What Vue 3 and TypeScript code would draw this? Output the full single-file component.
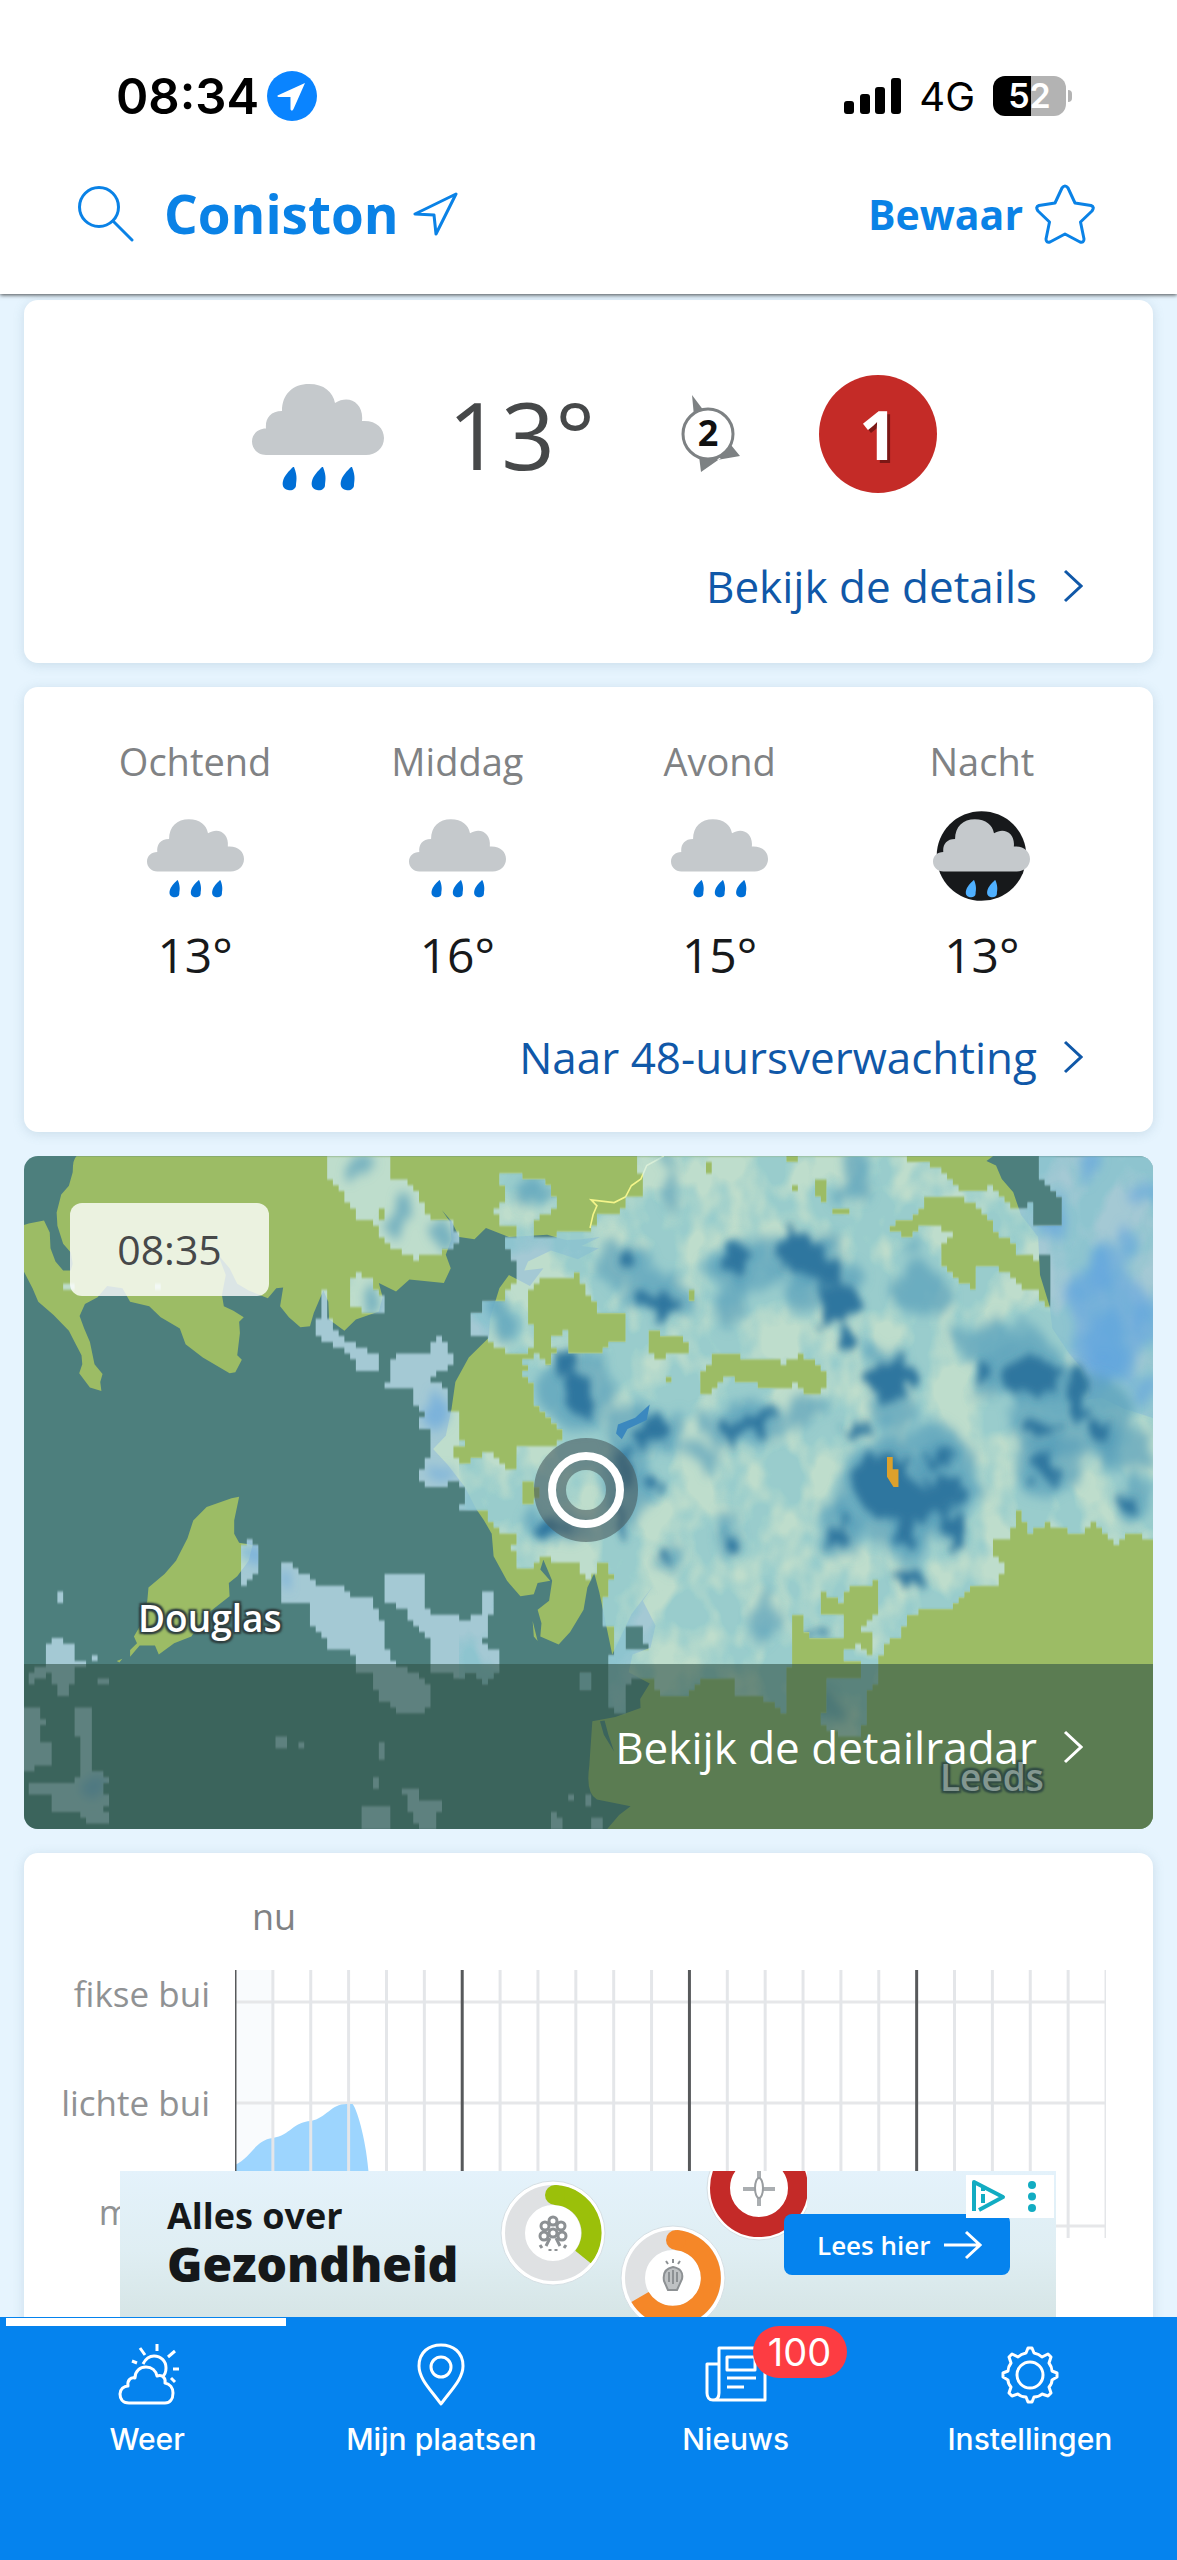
<script setup lang="ts">
interface DayPart {
  name: string
  temp: string
  night?: boolean
}

interface Blob {
  x: number
  y: number
  rx: number
  ry: number
}

type Point = [number, number]

const dayParts: DayPart[] = [
  { name: 'Ochtend', temp: '13°' },
  { name: 'Middag', temp: '16°' },
  { name: 'Avond', temp: '15°' },
  { name: 'Nacht', temp: '13°', night: true },
]

const cloudPath =
  'M14 71C6 71 0 65 0 57.500C0 50 6 44.500 14 44.500C13 35 18 27 30 27C30 10 41 0 57 0C72 0 81 8 83 19C97 10 112 19 110 37C124 36 132 44 132 54C132 64 124 71 114 71Z'
const drop = 'C46 93 44 97 44 101C44 105 40 107 36 106C31 105 30 101 31 97C32 92 37 87 41 83Z'

const blob = (x: number, y: number, rx: number, ry: number): Blob => ({ x, y, rx, ry })

// Outlines of the rain areas, in map units
const rainOutlines = `
  M1658 34L1673 75V125H1643L1638 155L1568 165L1563 180L1550 200H1475L1440 215H1400L1398 180L1445 155L1460 140L1440 110L1410 85H1370L1365 68H1312L1310 100L1325 130L1295 155L1310 185H1350L1355 210L1310 225L1340 260L1355 300L1325 340L1320 355L1262 360V380H1232V433H1275L1290 455L1320 470H1382L1398 435L1382 400L1388 320L1430 303L1480 313L1510 290L1530 335L1568 380H1630V455H1593L1548 485L1520 470H1490V425L1445 440L1448 475L1430 500L1405 480L1370 490L1375 515L1342 530L1385 520L1390 560L1405 600L1460 640L1475 665L1440 685H1360L1340 680L1355 700L1340 745L1300 710L1265 695L1240 715L1210 720L1187 700V680L1215 690L1200 650V605H1170L1168 555L1125 535L1140 520L1170 510L1185 485L1165 460L1150 435L1127 450L1125 475H1035L1020 500L1022 535L1003 548L1080 550V590L1110 605L1095 640L1125 650L1128 710H1110L1095 760L1125 772H1175L1185 755L1215 790L1203 825H1275L1285 860L1305 880H1345L1340 920L1360 955H1398L1415 935L1505 945L1530 985L1550 975L1558 945H1583L1598 975L1583 1020L1568 1040L1573 1075L1598 1090L1603 1150L1583 1160L1586 1270L1628 1280L1633 1215L1698 1200L1713 1230L1748 1245H1798L1828 1210H1920L1923 1245L1968 1235L2008 1255L2053 1285L2060 1180L2073 1165V1065H2093V1100L2148 1115L2198 1110L2208 1100L2198 1060H2153L2148 1010L2198 1030L2218 1000L2288 988V1060L2243 1100L2286 1105L2273 1150L2253 1130L2198 1140V1165H2253L2258 1190L2228 1205H2153L2163 1260L2138 1300L2198 1330H2253L2268 1240L2298 1200L2305 1130L2358 1105L2368 1070L2428 1045H2488L2558 990L2608 998L2623 950L2596 930V897L2643 885L2658 815L2688 880L2738 855L2818 880L2863 855L2923 905L2968 868L3018 905V34H2718V75L2738 100L2773 130V185L2723 195L2698 180L2700 135L2673 150L2653 155L2588 105L2518 110L2468 75L2428 50L2358 38V34Z
  M2058 34H2088V50H2063ZM1846 52H1860V78H1846ZM2136 92H2166V140L2136 130ZM2180 145H2213V158H2180ZM2073 105H2088V118H2073ZM2318 185L2378 180L2433 120L2508 125L2558 150L2588 175L2608 210L2653 225L2663 255L2713 265L2718 330L2673 328L2628 295L2578 278L2550 285L2548 328L2508 322L2458 270V230L2498 205L2418 190L2363 222ZM1688 422L1793 445L1798 472L1723 487L1693 465ZM1828 530L1873 475H1938V487L2053 497L2098 478L2166 520L2148 565L2093 562L2088 542L2023 562L1968 545L1893 530L1858 562H1828ZM1798 330H1813V355H1798ZM1738 525H1751V538H1738ZM1630 1090H1678L1693 1140H1630ZM2723 250H2748V380L2713 345ZM1370 765H1395L1412 790L1400 812H1370Z
  M850 34H1015L1018 80L1060 85L1115 150L1120 172H1170L1200 210L1185 245H1160L1155 260L1080 262L1040 245L990 215L1003 150H990L985 185L940 180L895 120L850 75Z
  M915 330L930 290L970 315L1000 350V380L925 378Z
  M835 335H860V400L890 440L985 480V510L930 512L920 490L880 460L820 430L835 390Z
  M655 890L682 910V960L635 998V910Z
  M728 945H755L850 1000L890 995L920 1020L965 1015L1000 1080L1005 1130L1035 1170L1125 1215V1260L1100 1285H1040L985 1240L970 1190H930L920 1145L865 1140L805 1065L803 1040L745 1035L728 1000Z
  M1003 975L1110 970V1040L1140 1065L1190 1055L1205 1075L1260 1060L1265 1012L1293 1015L1290 1050L1275 1070L1265 1130L1308 1150V1185L1270 1215L1235 1190L1195 1205L1165 1185H1128L1125 1120L1080 1085L1060 1050L1003 1030Z
  M145 1012H162V1038H145ZM115 1125L145 1115L190 1130L195 1160L250 1158L190 1190L185 1235L165 1255L145 1230L135 1190L70 1218L75 1190L115 1180Z
  M62 1265H105L115 1300L100 1340L130 1345V1400L62 1410Z
  M190 1275H238L235 1400L285 1425L270 1450L285 1480L270 1500L298 1515L280 1535L225 1530L210 1505H135L130 1470L70 1465V1435L185 1445L210 1410V1335L190 1325Z
  M250 1208H284V1220H250ZM727 1340H757V1364H727ZM787 1352H802V1364H787ZM988 1352H1002V1390H988ZM972 1420H1000L985 1455H972ZM942 1485H1017V1541H942ZM1050 1447H1090L1095 1475L1155 1475L1140 1541H1100L1065 1490ZM1522 1195H1538V1232H1522ZM1480 1470L1505 1450L1490 1480ZM1435 1500L1475 1520V1541H1440ZM1525 1470H1550V1495H1525ZM1540 1510H1570V1541H1540ZM160 315H190V328H160ZM400 315H425V328H400Z`

const CELL_W = 15
const CELL_H = 13

function parseOutlines(d: string): Point[][] {
  const shapes: Point[][] = []
  let x = 0
  let y = 0
  for (const [, op, args] of d.matchAll(/([MLHVZ])([^MLHVZ]*)/g)) {
    const n = args.trim().split(/\s+/).map(Number)
    if (op === 'Z') continue
    if (op === 'M') shapes.push([])
    if (op === 'H') x = n[0]
    else if (op === 'V') y = n[0]
    else [x, y] = n
    shapes[shapes.length - 1].push([x, y])
  }
  return shapes
}

function toCells(d: string): string {
  const shapes = parseOutlines(d)
  let out = ''
  for (let top = 34; top < 1545; top += CELL_H) {
    const mid = top + CELL_H / 2
    const cuts: number[] = []
    for (const s of shapes) {
      s.forEach(([ax, ay], i) => {
        const [bx, by] = s[(i + 1) % s.length]
        if (ay > mid !== by > mid) cuts.push(ax + ((mid - ay) / (by - ay)) * (bx - ax))
      })
    }
    cuts.sort((a, b) => a - b)
    for (let i = 0; i + 1 < cuts.length; i += 2) {
      const from = Math.round(cuts[i] / CELL_W) * CELL_W
      const to = Math.round(cuts[i + 1] / CELL_W) * CELL_W
      if (to > from) out += `M${from} ${top}H${to}V${top + CELL_H}H${from}Z`
    }
  }
  return out
}

const rainCells = toCells(rainOutlines)

const moderate: Blob[] = [
  blob(1628, 270, 70, 46), blob(2010, 270, 150, 60), blob(2150, 310, 90, 70), blob(2398, 330, 80, 66),
  blob(2588, 440, 120, 34), blob(2800, 620, 160, 100), blob(2738, 730, 90, 70), blob(1838, 700, 46, 26),
  blob(2000, 1060, 24, 60), blob(1390, 125, 46, 36), blob(1045, 170, 30, 66), blob(930, 60, 40, 30),
  blob(1150, 215, 30, 30), blob(1320, 410, 36, 36), blob(1460, 865, 90, 30), blob(2320, 590, 60, 50),
  blob(2420, 680, 110, 50), blob(1690, 650, 110, 60), blob(2230, 80, 46, 40), blob(1760, 110, 20, 50),
  blob(1510, 560, 110, 80), blob(1950, 630, 110, 45), blob(2190, 880, 60, 70), blob(2330, 790, 150, 110),
  blob(2470, 790, 80, 100), blob(1905, 890, 20, 60), blob(1750, 940, 40, 26), blob(2960, 800, 50, 40),
  blob(2160, 1265, 50, 34), blob(2680, 520, 120, 70), blob(950, 340, 24, 22), blob(1640, 760, 60, 100),
  blob(2370, 900, 50, 50), blob(1920, 340, 40, 70), blob(1720, 340, 90, 40), blob(2320, 480, 60, 30),
  blob(2580, 520, 50, 50), blob(2940, 690, 80, 50), blob(2110, 600, 60, 30), blob(1730, 40, 40, 16),
]
const heavy: Blob[] = [
  blob(1930, 270, 36, 34), blob(2090, 250, 62, 44), blob(2150, 290, 44, 34), blob(2188, 365, 56, 44),
  blob(2216, 440, 32, 26), blob(1723, 365, 54, 26), blob(2328, 535, 66, 46), blob(2688, 530, 76, 50),
  blob(2572, 520, 20, 22), blob(1900, 645, 26, 26), blob(1975, 625, 56, 26), blob(1704, 650, 52, 30),
  blob(1518, 580, 32, 70), blob(1480, 500, 30, 30), blob(2310, 770, 88, 72), blob(2380, 810, 60, 44),
  blob(2470, 790, 46, 42), blob(2492, 870, 28, 42), blob(2188, 885, 30, 34), blob(2378, 985, 46, 11),
  blob(1910, 900, 14, 36), blob(2138, 1097, 34, 9), blob(2244, 648, 44, 9), blob(2820, 570, 28, 60),
  blob(2870, 640, 30, 26), blob(2950, 820, 40, 14), blob(1640, 740, 18, 50), blob(1625, 850, 14, 40),
  blob(2720, 640, 50, 14), blob(2370, 880, 30, 28), blob(1440, 870, 46, 20), blob(1715, 765, 26, 16),
  blob(2730, 730, 30, 30), blob(1640, 270, 36, 20), blob(2460, 710, 40, 16), blob(1740, 940, 20, 12),
]
const offshore: Blob[] = [
  blob(2900, 440, 46, 60), blob(2988, 130, 50, 22), blob(2983, 560, 36, 26), blob(2850, 60, 40, 30),
  blob(2860, 300, 36, 40), blob(2806, 340, 22, 30), blob(2880, 520, 60, 50), blob(2950, 220, 30, 40),
  blob(660, 930, 18, 36), blob(755, 980, 22, 26), blob(1140, 600, 26, 50), blob(1150, 740, 36, 22),
  blob(2760, 180, 20, 40), blob(2990, 400, 26, 60), blob(230, 1450, 40, 26), blob(2900, 400, 90, 160),
]

const chartLines = Array.from({ length: 24 }, (_, i) => ({
  x: i * 38,
  kind: i === 0 ? 'edge' : i % 6 === 0 ? 'hour' : 'tick',
}))
</script>

<template>
  <div class="app">
    <header class="top">
      <div class="status">
        <div class="status-left">
          <span class="clock">08:34</span>
          <svg class="loc" viewBox="0 0 50 50" aria-hidden="true">
            <circle cx="25" cy="25" r="25" fill="#0a84ff" />
            <path d="M38 12L10.500 24.500Q10 26 12 26H23.500V38.500Q25 41 26.500 38Z" fill="#fff" />
          </svg>
        </div>
        <div class="status-right">
          <svg class="signal" viewBox="0 0 57 36" aria-hidden="true">
            <rect x="0" y="23" width="10" height="13" rx="3" />
            <rect x="16" y="16" width="10" height="20" rx="3" />
            <rect x="31" y="9" width="10" height="27" rx="3" />
            <rect x="47" y="0" width="10" height="36" rx="3" />
          </svg>
          <span class="network">4G</span>
          <span class="battery"><span class="level">52</span></span>
        </div>
      </div>
      <div class="titlebar">
        <button class="icon-btn" aria-label="Zoeken">
          <svg width="56" height="56" viewBox="0 0 56 56" class="line">
            <circle cx="21" cy="21" r="19.500" />
            <path d="M35 35L54 54" />
          </svg>
        </button>
        <h1>Coniston</h1>
        <svg class="line arrow" width="46" height="46" viewBox="0 0 46 46" aria-hidden="true">
          <path d="M43 3L2 23L21 24L23 43Z" />
        </svg>
        <button class="save">
          Bewaar
          <svg width="60" height="60" viewBox="0 0 60 60" class="line">
            <path d="M27 4Q30 0 33 4L40 19L56 21.500Q60 23 57 27L45.500 38L49 55Q49 59 45 58L30 50L15 58Q11 59 11 55L14.500 38L3 27Q0 23 4 21.500L20 19Z" />
          </svg>
        </button>
      </div>
    </header>

    <main>
      <section class="card now">
        <div class="current">
          <svg class="cloud-big" viewBox="0 0 132 107" aria-hidden="true">
            <path :d="cloudPath" fill="#c5c9cc" />
            <path v-for="n in 3" :key="n" :d="'M42 83' + drop" :transform="`translate(${(n - 1) * 29} 0)`" fill="#006fd6" />
          </svg>
          <span class="temp-big">13°</span>
          <svg class="wind" viewBox="0 0 60 80" role="img" aria-label="Wind 2">
            <path d="M11 1L23 17L13 22Z" fill="#7d8183" />
            <path d="M50 51L59 62L36 66ZM18 62L20 78L40 64Z" fill="#7d8183" />
            <circle cx="27" cy="40" r="25" fill="#fff" stroke="#7d8183" stroke-width="3" />
            <text x="27" y="52" text-anchor="middle">2</text>
          </svg>
          <span class="grade">1</span>
        </div>
        <a class="more" href="#details">Bekijk de details
          <svg viewBox="0 0 20 34" aria-hidden="true"><path d="M2 2L18 17L2 32" /></svg>
        </a>
      </section>

      <section class="card parts">
        <ul>
          <li v-for="part in dayParts" :key="part.name">
            <span class="part-name">{{ part.name }}</span>
            <svg class="cloud-small" viewBox="0 0 132 122" aria-hidden="true">
              <circle v-if="part.night" cx="66" cy="61" r="61" fill="#17191b" />
              <g transform="translate(0 11)">
                <path :d="cloudPath" fill="#c5c9cc" />
                <template v-if="part.night">
                  <path v-for="n in 2" :key="n" :d="'M42 83' + drop" :transform="`translate(${(n - 1) * 29 + 14} 0)`" fill="#4fb0ff" />
                </template>
                <template v-else>
                  <path v-for="n in 3" :key="n" :d="'M42 83' + drop" :transform="`translate(${(n - 1) * 29} 0)`" fill="#006fd6" />
                </template>
              </g>
            </svg>
            <span class="part-temp">{{ part.temp }}</span>
          </li>
        </ul>
        <a class="more" href="#48uur">Naar 48-uursverwachting
          <svg viewBox="0 0 20 34" aria-hidden="true"><path d="M2 2L18 17L2 32" /></svg>
        </a>
      </section>

      <section class="radar">
        <svg class="map" viewBox="0 0 1129 673" preserveAspectRatio="xMidYMid slice" aria-hidden="true">
          <defs>
            <path id="rain" :d="rainCells" />
            <clipPath id="rain-clip"><use href="#rain" /></clipPath>
            <filter id="soft-mid" filterUnits="userSpaceOnUse" x="0" y="0" width="3080" height="1560">
              <feTurbulence type="fractalNoise" baseFrequency="0.012" numOctaves="3" seed="4" result="n" />
              <feDisplacementMap in="SourceGraphic" in2="n" scale="110" xChannelSelector="R" yChannelSelector="G" />
              <feGaussianBlur stdDeviation="13" />
            </filter>
            <filter id="soft-high" filterUnits="userSpaceOnUse" x="0" y="0" width="3080" height="1560">
              <feTurbulence type="fractalNoise" baseFrequency="0.02" numOctaves="3" seed="7" result="n" />
              <feDisplacementMap in="SourceGraphic" in2="n" scale="80" xChannelSelector="R" yChannelSelector="G" />
              <feGaussianBlur stdDeviation="10" />
            </filter>
            <filter id="mottle" x="0" y="0" width="100%" height="100%" color-interpolation-filters="sRGB">
              <feTurbulence type="fractalNoise" baseFrequency="0.009 0.008" numOctaves="3" seed="9" />
              <feColorMatrix values="0 0 0 0 0.5 0 0 0 0 0.76 0 0 0 0 0.8 4 0 0 0 -1.400" />
            </filter>
            <filter id="edge"><feGaussianBlur stdDeviation="2" /></filter>
          </defs>
          <rect width="1129" height="673" fill="#4d7f7d" />
          <g transform="translate(-24 -15) scale(.38265 .44643)">
            <g fill="#9cbc65">
              <path d="M200 34Q190 40 190 70L180 100L160 120L148 160L150 190L165 230L185 250L190 275L185 290H165L145 270L132 240L130 205L115 178L75 185L55 190V280L85 330L100 360L140 390L180 425L195 450L213 480L215 500L207 520L235 552L265 560L262 540L268 522L247 500L235 450L220 420L208 392L222 365L255 350L280 325L320 330L340 360L390 370L420 395L470 420L485 455L530 485L600 520L615 518L632 490L620 480L627 430L625 405L637 395L610 380L585 370L580 345L590 300L570 255L600 285L620 320L650 335L700 352L722 330L740 328L732 370L755 395L785 417L810 415L820 385L845 335L858 360L860 400L900 425L930 400L990 382L1000 350L990 318L1035 337L1070 310L1160 318L1178 285L1165 255L1180 220L1175 180L1155 155L1180 180L1200 215L1240 220L1270 195L1330 215L1430 210L1480 222L1520 220L1568 215L1520 235L1565 240L1510 265L1440 245L1380 270L1370 290L1420 285L1385 325L1330 300L1305 330L1280 400L1278 440L1225 485L1190 540L1180 600L1175 620L1165 660L1132 690L1170 725L1215 775L1245 825L1265 850L1285 880L1290 930L1325 985L1360 1020L1395 1015L1405 990L1438 985L1412 960L1420 938L1443 985L1435 1030L1405 1050L1415 1080L1412 1110L1460 1128L1490 1100L1525 1050L1535 1000L1553 968L1566 1010L1583 1080L1600 1150L1650 1060L1708 995L1680 1030L1713 1085L1700 1135L1653 1150L1643 1190L1698 1215L1673 1250L1674 1270L1608 1290L1548 1300L1540 1400Q1530 1460 1560 1475L1648 1490L1618 1510L1583 1545H3018V622L2938 600L2878 575L2833 580L2848 570L2828 510L2793 475L2750 420L2743 370L2718 300L2713 215L2668 165L2648 115L2618 85L2603 55L2578 45L2595 34Z" />
              <path d="M625 797L605 800L540 820L505 850L490 890L460 940L430 970L388 1000L385 1030L370 1080L350 1110L358 1125L340 1140V1155L365 1130H405L415 1150L455 1125L500 1110L540 1060L600 1020L598 990L620 975L650 940L660 905L625 900L612 880V850Z" />
              <path d="M1392 1075L1405 1120L1395 1110ZM305 1165L320 1160L312 1168Z" />
            </g>
            <path d="M1568 1300L1578 1330L1605 1368L1590 1330L1580 1298Z" fill="#4d7f7d" />
            <path d="M1735 34L1690 55L1675 85L1650 100L1635 125L1605 138L1545 132L1560 145L1550 165L1542 195" fill="none" stroke="#f4f58a" stroke-width="4" />
            <use href="#rain" fill="#d0edff" fill-opacity=".67" filter="url(#edge)" />
            <g clip-path="url(#rain-clip)">
              <rect x="1200" y="34" width="1818" height="1300" filter="url(#mottle)" opacity=".6" />
              <g filter="url(#soft-mid)">
                <ellipse v-for="(b, i) in offshore" :key="i" :cx="b.x" :cy="b.y" :rx="b.rx" :ry="b.ry" fill="#5fa3e0" fill-opacity=".6" />
              </g>
              <g filter="url(#soft-mid)">
                <ellipse v-for="(b, i) in moderate" :key="i" :cx="b.x" :cy="b.y" :rx="b.rx" :ry="b.ry" fill="#569dba" fill-opacity=".68" />
              </g>
              <g filter="url(#soft-high)">
                <ellipse v-for="(b, i) in heavy" :key="i" :cx="b.x" :cy="b.y" :rx="b.rx" :ry="b.ry" fill="#2e769f" />
              </g>
            </g>
            <path d="M1698 590L1690 625L1640 645L1625 668L1610 655L1615 635L1660 620Z" fill="#3b88bf" />
            <path d="M2318 708H2333V735H2348V775H2335L2318 752Z" fill="#dda12c" />
          </g>
        </svg>
        <span class="place douglas">Douglas</span>
        <span class="place leeds">Leeds</span>
        <svg class="marker" viewBox="0 0 104 104" aria-hidden="true">
          <circle cx="52" cy="52" r="36" fill="none" stroke="#4a5c5f" stroke-opacity=".6" stroke-width="32" />
          <circle cx="52" cy="52" r="34" fill="none" stroke="#fff" stroke-width="8" />
        </svg>
        <time class="stamp">08:35</time>
        <a class="more radar-link" href="#radar">Bekijk de detailradar
          <svg viewBox="0 0 20 34" aria-hidden="true"><path d="M2 2L18 17L2 32" /></svg>
        </a>
      </section>

      <section class="card graph">
        <div class="graph-head">nu</div>
        <div class="graph-body">
          <div class="levels">
            <span>fikse bui</span>
            <span>lichte bui</span>
            <span>miezer</span>
          </div>
          <svg class="plot" viewBox="0 0 874 268" preserveAspectRatio="none" aria-hidden="true">
            <rect width="38" height="268" fill="#f9fbfd" />
            <path d="M0 32H874M0 133H874M0 256H874" stroke="#e6e7e9" stroke-width="3" />
            <path d="M0 195C16 188 20 170 38 168C56 165 58 152 76 151C92 148 96 134 112 134H118C124 142 132 175 134 202L142 268H0Z" fill="#9dd5fe" />
            <line v-for="l in chartLines" :key="l.x" :x1="l.x" :x2="l.x" y1="0" y2="268" :class="l.kind" />
          </svg>
        </div>
      </section>
    </main>

    <div class="dock">
      <aside class="ad">
        <div class="ad-copy">
          <span class="ad-lead">Alles over</span>
          <strong>Gezondheid</strong>
        </div>
        <svg class="dials" viewBox="0 0 320 146" aria-hidden="true">
          <g transform="translate(66 62)">
            <circle r="52" fill="#fff" stroke="#d5dfe4" />
            <circle r="38" fill="none" stroke="#dfe1e3" stroke-width="20" />
            <path d="M2 -38A38 38 0 0 1 30 24" fill="none" stroke="#9bc00a" stroke-width="20" />
            <circle cx="2" cy="-38" r="10" fill="#9bc00a" />
            <g fill="none" stroke="#8d9194" stroke-width="3">
              <circle r="4" />
              <circle cx="-8" cy="-7" r="4" /><circle cx="8" cy="-7" r="4" /><circle cx="-9" cy="3" r="4" /><circle cx="9" cy="3" r="4" /><circle cy="-12" r="4" />
              <path d="M-3 5L-7 13M3 5L7 13M-13 12L-11 15M13 12L11 15M-3 16V18M3 16V18" />
            </g>
          </g>
          <g transform="translate(186 107)">
            <circle r="52" fill="#fff" stroke="#d5dfe4" />
            <circle r="38" fill="none" stroke="#dfe1e3" stroke-width="20" />
            <path d="M3 -38A38 38 0 1 1 -33 19" fill="none" stroke="#f58728" stroke-width="20" />
            <circle cx="3" cy="-38" r="10" fill="#f58728" />
            <path d="M-5 12L-9 3Q-11 -9 0 -11Q11 -9 9 1L4 12ZM-4 -6V4M0 -8V6M4 -6V4M-7 -17L-5 -14M0 -19V-15M7 -17L5 -14" fill="#bfc2c4" stroke="#8d9194" stroke-width="2" />
          </g>
          <g transform="translate(272 17)">
            <circle r="52" fill="#fff" stroke="#d5dfe4" />
            <circle r="39" fill="none" stroke="#c42a28" stroke-width="20" />
            <path d="M0 -20V18M-16 1H16" stroke="#aaaeb1" stroke-width="4" />
            <ellipse rx="4" ry="10" fill="#fff" stroke="#999da0" stroke-width="2" />
          </g>
        </svg>
        <a class="ad-btn" href="#gezondheid">Lees hier
          <svg viewBox="0 0 38 30" aria-hidden="true"><path d="M0 15H35M22 2L36 15L22 28" /></svg>
        </a>
        <svg class="ad-choices" viewBox="0 0 88 43" aria-hidden="true">
          <rect width="88" height="43" fill="#fff" />
          <path d="M8 36V7L37 22L13 35" fill="none" stroke="#12acc2" stroke-width="4" stroke-linejoin="round" />
          <path d="M17 19V28M17 13V16" stroke="#12acc2" stroke-width="4" />
          <circle cx="66" cy="10" r="4" fill="#12acc2" /><circle cx="66" cy="21.500" r="4" fill="#12acc2" /><circle cx="66" cy="33" r="4" fill="#12acc2" />
        </svg>
      </aside>

      <nav class="tabs">
        <a class="tab active" href="#weer" aria-current="page">
          <svg viewBox="0 0 64 64" aria-hidden="true">
            <path d="M14 60C7 60 5 55 5 51C5 46 9 43 13 43C12 37 16 34 20 35C20 28 25 24 31 24C37 24 41 28 42 33C47 31 51 35 50 40C55 41 58 45 58 50C58 56 55 60 50 60Z" />
            <path d="M31 21C34 15 38 13 42 13C49 13 54 18 54 25C54 29 53 32 50 34" transform="translate(-3 0)" />
            <path d="M42 1V8M25 5L30 12M60 8L53 14M17 18L22 20M64 26H58M60 39L56 35" />
          </svg>
          <span>Weer</span>
        </a>
        <a class="tab" href="#plaatsen">
          <svg viewBox="0 0 64 64" aria-hidden="true">
            <path d="M32 61C22 47 10 36 10 23C10 9 20 2 32 2C44 2 54 9 54 23C54 36 42 47 32 61Z" />
            <circle cx="32" cy="24" r="10" />
          </svg>
          <span>Mijn plaatsen</span>
        </a>
        <a class="tab" href="#nieuws">
          <svg viewBox="0 0 64 64" aria-hidden="true">
            <path d="M15 50V5H61V57H10M15 50C15 55 13 57 9 57C5 57 3 54 3 50V21H15" />
            <path d="M23 14H51V27H23ZM23 35H52M23 44H40" />
          </svg>
          <span>Nieuws</span>
          <em class="badge">100</em>
        </a>
        <a class="tab" href="#instellingen">
          <svg viewBox="0 0 64 64" aria-hidden="true">
            <path d="M28 10L30 5H34L36 10Q41 11 44 14L50 11L53 14L51 20Q54 24 54 28L59 30V34L54 37Q54 41 51 44L53 50L50 53L44 51Q41 54 36 54L34 59H30L28 54Q23 54 20 51L14 53L11 50L13 44Q10 41 10 37L5 34V30L10 28Q10 24 13 20L11 14L14 11L20 14Q23 11 28 10Z" />
            <circle cx="32" cy="32" r="13" />
          </svg>
          <span>Instellingen</span>
        </a>
      </nav>
    </div>
  </div>
</template>

<style>
body {
  margin: 0;
}
</style>

<style scoped>
.app {
  height: 100vh;
  display: flex;
  flex-direction: column;
  background: #e6f4fe;
  font-family: "Open Sans", "Noto Sans", sans-serif;
  overflow: hidden;
}
.top {
  background: #fff;
  box-shadow: 0 1px 4px rgba(0, 0, 0, 0.7);
  position: relative;
  z-index: 1;
  height: 294px;
  flex: none;
}
.status {
  display: flex;
  justify-content: space-between;
  align-items: center;
  height: 52px;
  padding: 70px 104px 0 116px;
  font-family: Inter, "Liberation Sans", sans-serif;
  color: #000;
}
.status-left,
.status-right {
  display: flex;
  align-items: center;
}
.status-left {
  gap: 8px;
}
.clock {
  font-size: 49px;
  font-weight: 600;
}
.loc {
  width: 50px;
  height: 50px;
}
.signal {
  width: 57px;
  height: 36px;
}
.network {
  font-size: 40px;
  margin: 0 18px;
}
.battery {
  position: relative;
  width: 73px;
  height: 40px;
  border-radius: 12px;
  background: linear-gradient(90deg, #000 52%, #b3b3b3 52%);
  margin-right: 7px;
}
.battery::after {
  content: "";
  position: absolute;
  right: -6px;
  top: 14px;
  width: 4px;
  height: 12px;
  border-radius: 0 4px 4px 0;
  background: #b3b3b3;
}
.level {
  display: block;
  text-align: center;
  color: #fff;
  font-size: 34px;
  line-height: 40px;
  font-weight: 600;
}
.titlebar {
  display: flex;
  align-items: center;
  height: 64px;
  padding: 60px 82px 0 78px;
  color: #0a82e6;
}
.line {
  fill: none;
  stroke: #0a82e6;
  stroke-width: 3;
  stroke-linejoin: round;
  stroke-linecap: round;
  flex: none;
}
button {
  border: 0;
  padding: 0;
  background: none;
  font-family: inherit;
  color: inherit;
  display: flex;
  align-items: center;
}
h1 {
  margin: 0 14px 0 30px;
  font-size: 53px;
  line-height: 64px;
  font-weight: 700;
}
.save {
  margin-left: auto;
  gap: 12px;
  font-size: 41px;
  font-weight: 700;
}
main {
  flex: 1;
  min-height: 0;
  overflow: hidden;
  padding: 6px 24px 0;
  display: flex;
  flex-direction: column;
  gap: 24px;
}
.card {
  flex: none;
  background: #fff;
  border-radius: 14px;
  box-shadow: 0 2px 12px rgba(90, 130, 150, 0.2);
}
.current {
  display: flex;
  align-items: center;
  justify-content: center;
  height: 120px;
  padding: 74px 0 66px 12px;
}
.cloud-big {
  width: 132px;
  height: 107px;
  margin-top: 6px;
}
.temp-big {
  margin: 0 86px 0 64px;
  color: #464849;
  font-size: 94px;
  line-height: 120px;
}
.wind {
  width: 60px;
  height: 80px;
  margin-right: 78px;
}
.wind text {
  font-size: 36px;
  font-weight: 700;
  fill: #111;
}
.grade {
  width: 118px;
  height: 118px;
  border-radius: 50%;
  background: #c42b27;
  color: #fff;
  font-size: 68px;
  line-height: 118px;
  font-weight: 700;
  text-align: center;
  text-shadow: 3px 3px 0 #7c1715;
}
.more {
  display: flex;
  align-items: center;
  justify-content: flex-end;
  gap: 26px;
  padding: 0 70px 0 0;
  height: 52px;
  font-size: 44px;
  line-height: 52px;
  color: #1058a8;
  text-decoration: none;
}
.more svg {
  width: 20px;
  height: 34px;
  fill: none;
  stroke: currentColor;
  stroke-width: 3;
}
.now .more {
  padding-bottom: 51px;
}
.parts {
  padding: 48px 40px 49px;
}
.parts ul {
  list-style: none;
  margin: 0;
  padding: 0 0 46px;
  display: grid;
  grid-template-columns: repeat(4, 1fr);
}
.parts li {
  display: flex;
  flex-direction: column;
  align-items: center;
}
.part-name {
  font-size: 38px;
  line-height: 52px;
  color: #808284;
}
.cloud-small {
  width: 97px;
  height: 90px;
  margin: 24px 0;
}
.part-temp {
  font-size: 48px;
  line-height: 60px;
  color: #17191b;
}
.parts .more {
  padding-right: 30px;
}
.radar {
  flex: none;
  position: relative;
  height: 673px;
  border-radius: 14px;
  overflow: hidden;
}
.map {
  display: block;
  width: 100%;
  height: 100%;
}
.stamp {
  position: absolute;
  left: 46px;
  top: 47px;
  width: 199px;
  height: 93px;
  border-radius: 12px;
  background: rgba(255, 255, 255, 0.8);
  color: #464849;
  font-size: 41px;
  line-height: 93px;
  text-align: center;
}
.place {
  position: absolute;
  color: #fff;
  font-size: 37px;
  line-height: 52px;
  font-weight: 600;
  text-shadow: 2px 2px 2px #2f3f3f, -2px 2px 2px #2f3f3f, 2px -2px 2px #2f3f3f, -2px -2px 2px #2f3f3f;
}
.douglas {
  left: 114px;
  top: 436px;
}
.leeds {
  left: 916px;
  top: 595px;
}
.marker {
  position: absolute;
  left: 510px;
  top: 282px;
  width: 104px;
  height: 104px;
}
.radar-link {
  position: absolute;
  left: 0;
  right: 0;
  bottom: 0;
  height: 165px;
  background: rgba(49, 82, 70, 0.6);
  color: #fff;
}
.graph-head {
  padding: 40px 0 35px 228px;
  font-size: 36px;
  line-height: 48px;
  color: #808284;
}
.graph-body {
  display: flex;
  padding: 0 47px 120px 0;
  margin-top: -6px;
}
.levels {
  width: 186px;
  margin-right: 25px;
  display: flex;
  flex-direction: column;
  gap: 61px;
  text-align: right;
  font-size: 35px;
  line-height: 48px;
  color: #909294;
}
.plot {
  flex: 1;
  min-width: 0;
  height: 268px;
}
.plot .tick {
  stroke: #e4e6e9;
  stroke-width: 3;
}
.plot .hour {
  stroke: #57595b;
  stroke-width: 3;
}
.plot .edge {
  stroke: #57595b;
  stroke-width: 3;
}
.dock {
  flex: none;
  position: relative;
}
.ad {
  position: absolute;
  left: 120px;
  right: 121px;
  bottom: 100%;
  height: 146px;
  overflow: hidden;
  background: linear-gradient(180deg, #e4f2fb, #dfeef3 55%, #d6e5e6);
}
.ad-copy {
  position: absolute;
  left: 47px;
  top: 22px;
  display: flex;
  flex-direction: column;
  color: #15181a;
}
.ad-lead {
  font-size: 36px;
  line-height: 46px;
  font-weight: 700;
}
.ad strong {
  font-size: 48px;
  line-height: 50px;
  font-weight: 800;
}
.dials {
  position: absolute;
  left: 367px;
  top: 0;
  width: 320px;
  height: 146px;
}
.ad-btn {
  position: absolute;
  right: 46px;
  bottom: 42px;
  width: 193px;
  height: 61px;
  padding-left: 33px;
  display: flex;
  align-items: center;
  gap: 14px;
  border-radius: 8px;
  background: #0583ee;
  color: #fff;
  font-size: 26px;
  font-weight: 600;
  text-decoration: none;
}
.ad-btn svg {
  width: 38px;
  height: 30px;
  fill: none;
  stroke: #fff;
  stroke-width: 3;
}
.ad-choices {
  position: absolute;
  right: 2px;
  top: 4px;
  width: 88px;
  height: 43px;
}
.tabs {
  display: grid;
  grid-template-columns: repeat(4, 1fr);
  height: 243px;
  background: #0583ee;
  font-family: Inter, "Liberation Sans", sans-serif;
}
.tab {
  position: relative;
  display: flex;
  flex-direction: column;
  align-items: center;
  padding-top: 26px;
  color: #fff;
  text-decoration: none;
  font-size: 30px;
  line-height: 40px;
  font-weight: 500;
}
.tab svg {
  width: 64px;
  height: 64px;
  margin-bottom: 12px;
  fill: none;
  stroke: #fff;
  stroke-width: 3;
  stroke-linejoin: round;
}
.active::before {
  content: "";
  position: absolute;
  left: 6px;
  right: 8px;
  top: 1px;
  height: 8px;
  background: #fff;
}
.badge {
  position: absolute;
  left: 164px;
  top: 9px;
  width: 94px;
  height: 52px;
  border-radius: 26px;
  background: #fd3c42;
  font-style: normal;
  font-weight: 400;
  font-size: 38px;
  line-height: 52px;
  text-align: center;
}
</style>
